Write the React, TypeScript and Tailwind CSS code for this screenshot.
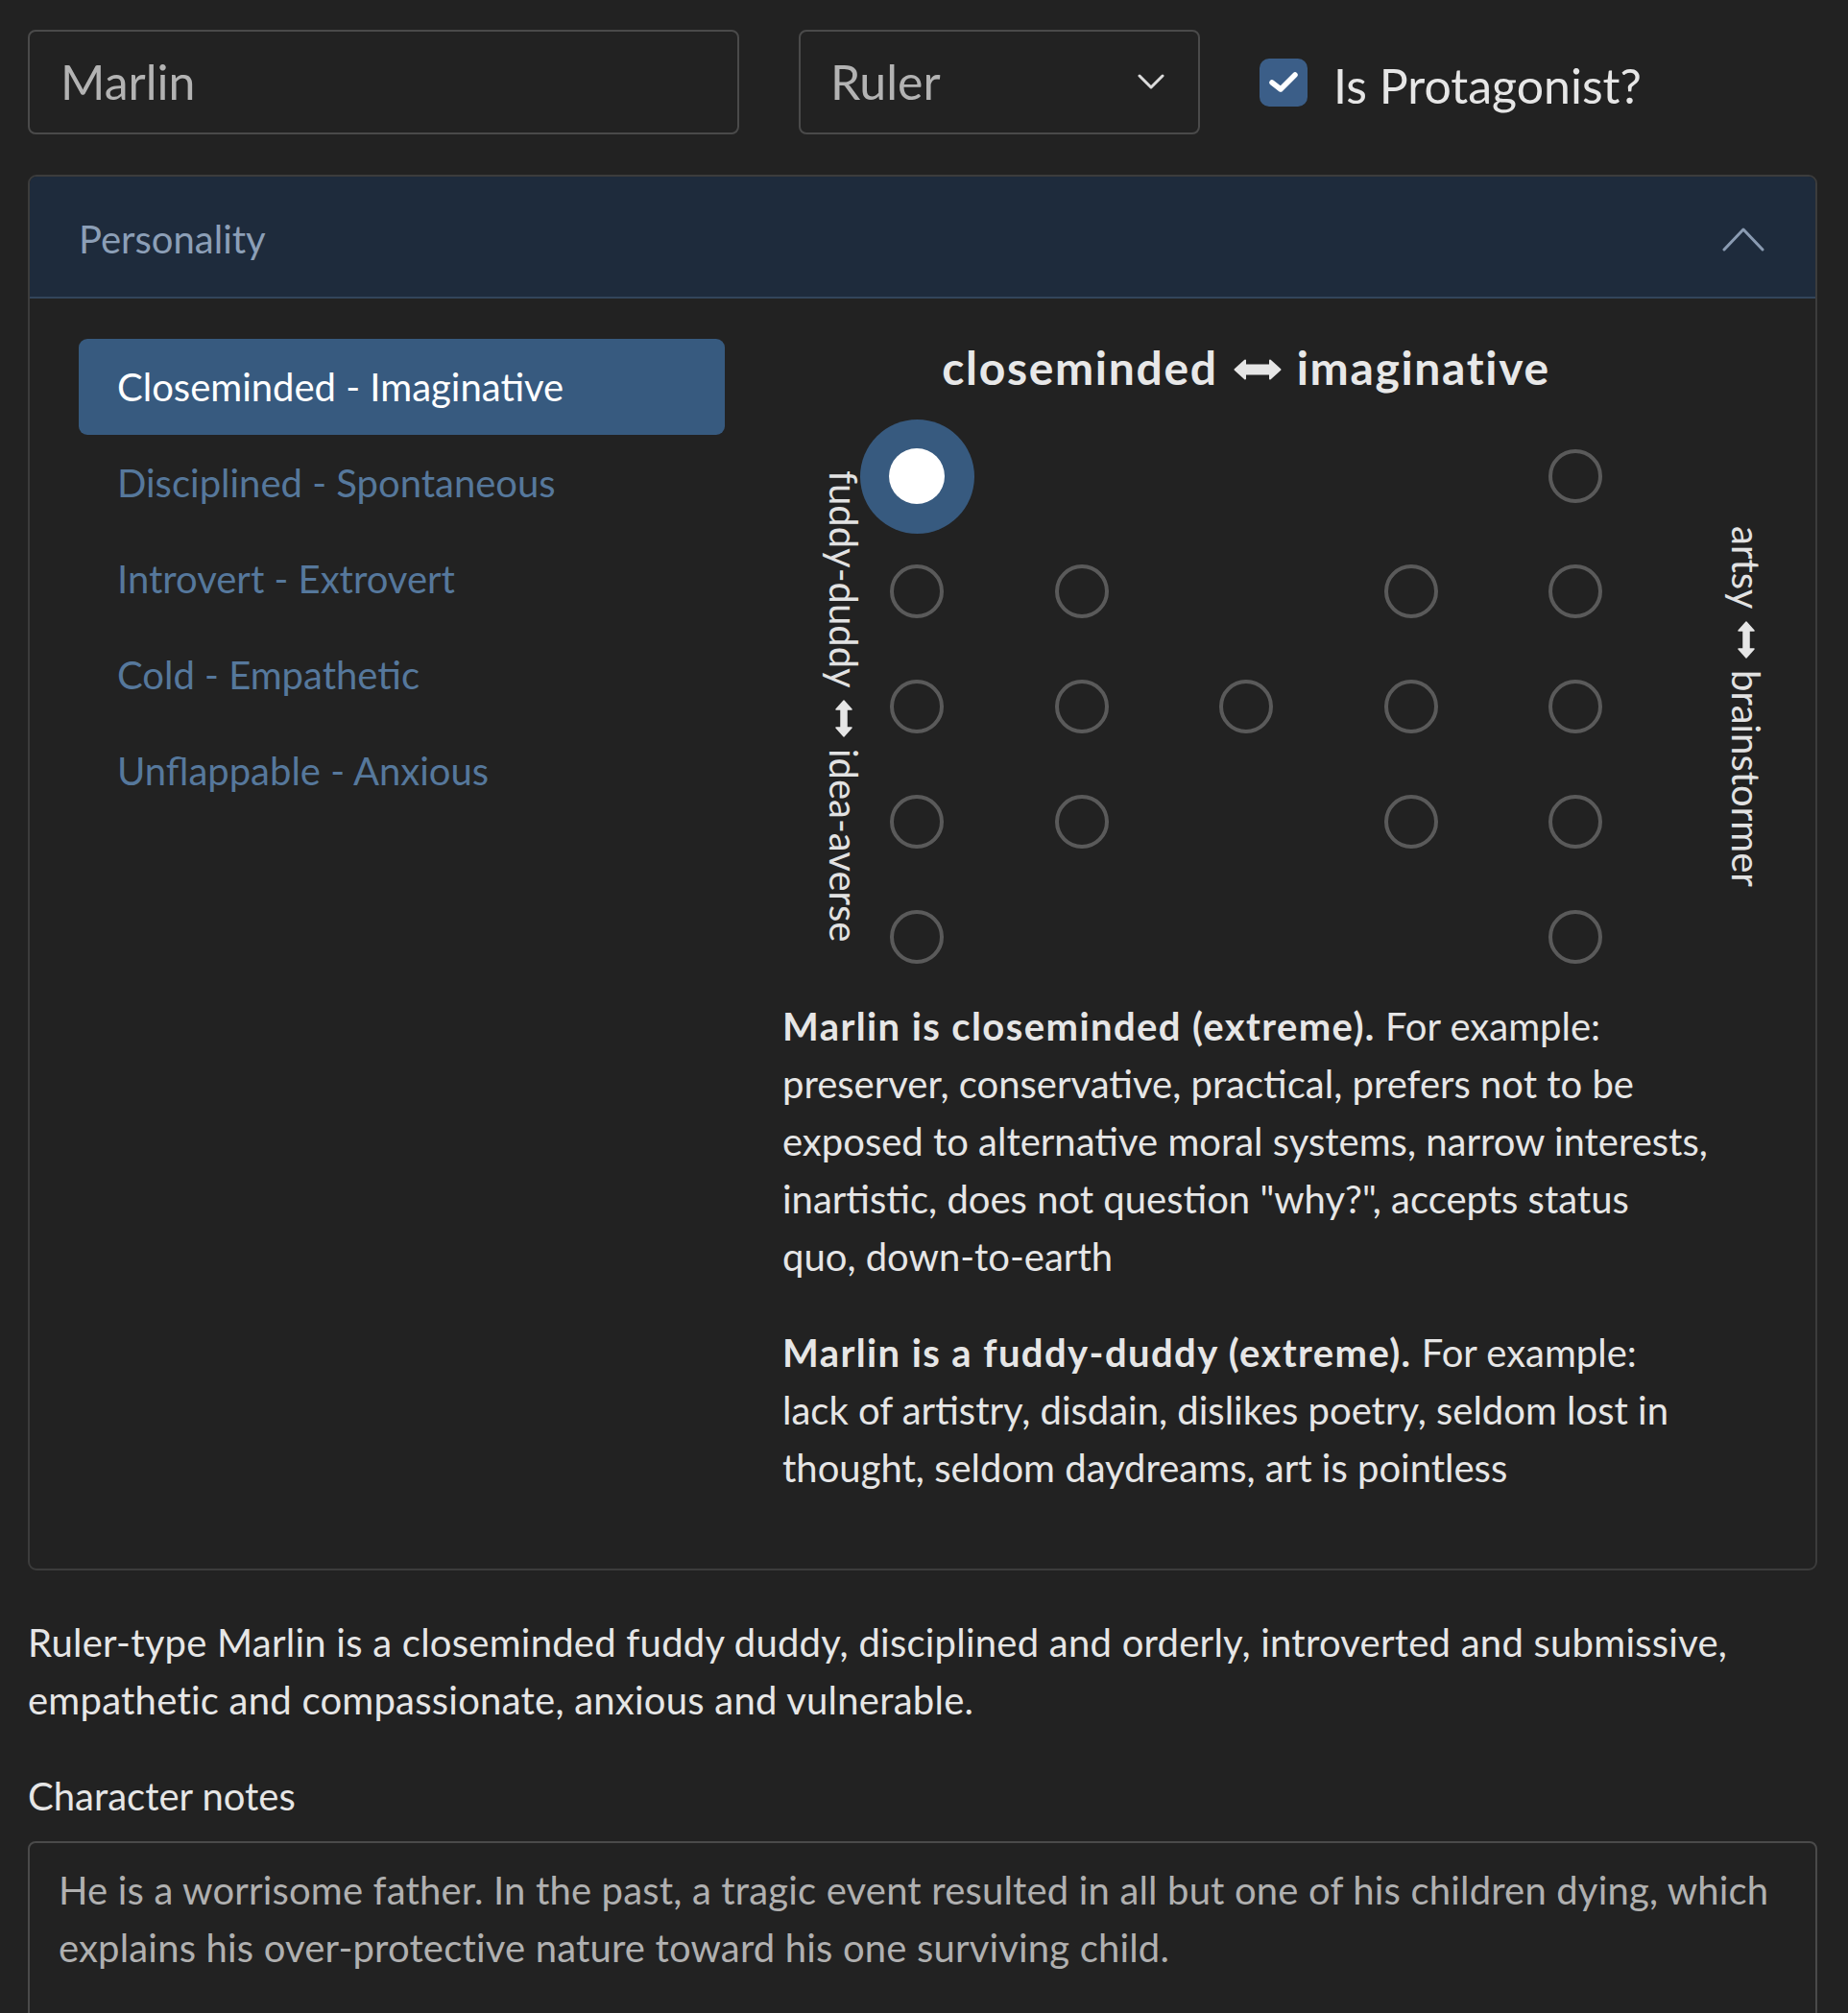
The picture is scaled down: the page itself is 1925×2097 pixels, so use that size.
import React from "react";

const font = "font-['Lato','Open_Sans',sans-serif]";

const TRAITS = [
    "Closeminded - Imaginative",
    "Disciplined - Spontaneous",
    "Introvert - Extrovert",
    "Cold - Empathetic",
    "Unflappable - Anxious",
];

// 1 = radio shown, 0 = empty slot
const GRID = [
    [1, 0, 0, 0, 1],
    [1, 1, 0, 1, 1],
    [1, 1, 1, 1, 1],
    [1, 1, 0, 1, 1],
    [1, 0, 0, 0, 1],
];

const HArrow = () => (
    <svg width="50" height="22" viewBox="0 0 50 22" className="shrink-0 mt-[4px]">
        <path
            d="M1.5 11 L12 1.5 L12 6.5 L38 6.5 L38 1.5 L48.5 11 L38 20.5 L38 15.5 L12 15.5 L12 20.5 Z"
            fill="#e6e6e6"
            stroke="#e6e6e6"
            strokeWidth="2"
            strokeLinejoin="round"
        />
    </svg>
);

const VArrow = () => (
    <svg width="18" height="39" viewBox="0 0 18 39" className="shrink-0">
        <path
            d="M9 1 L17 10 L12 10 L12 29 L17 29 L9 38 L1 29 L6 29 L6 10 L1 10 Z"
            fill="#e6e6e6"
            stroke="#e6e6e6"
            strokeWidth="1.5"
            strokeLinejoin="round"
        />
    </svg>
);

const SideLabel = (props: { top: string; bottom: string }) => {
    return (
        <div className="w-[60px] flex justify-center shrink-0">
            <div className="[writing-mode:vertical-rl] flex items-center gap-[12px] text-[40px] leading-[60px] text-[#e2e2e2]">
                <span>{props.top}</span>
                <VArrow />
                <span>{props.bottom}</span>
            </div>
        </div>
    );
};

const Radio = (props: { selected?: boolean }) => {
    if (props.selected) {
        return (
            <div className="w-[119px] h-[119px] shrink-0 rounded-full bg-[#375a7f] flex items-center justify-center">
                <div className="w-[58px] h-[58px] rounded-full bg-white" />
            </div>
        );
    }
    return <div className="w-[56px] h-[56px] shrink-0 rounded-full border-[4px] border-[#5a5a5a]" />;
};

export default function App() {
    return (
        <div className={`${font} bg-[#222222] text-[#e6e6e6] w-[1925px] h-[2097px] overflow-hidden pl-[29px] pr-[32px] pt-[31px]`}>
            {/* top row */}
            <div className="flex items-center">
                <div className="w-[741px] h-[109px] border-2 border-[#4a4a4a] rounded-[8px] flex items-center px-[32px] text-[50px] text-[#b3b3b3]">
                    Marlin
                </div>
                <div className="ml-[62px] w-[418px] h-[109px] border-2 border-[#4a4a4a] rounded-[8px] flex items-center justify-between pl-[31px] pr-[35px] text-[50px] text-[#b3b3b3]">
                    <span>Ruler</span>
                    <svg width="28" height="17" viewBox="0 0 28 17">
                        <path d="M2 2 L14 14 L26 2" fill="none" stroke="#dcdcdc" strokeWidth="3" strokeLinecap="round" strokeLinejoin="round" />
                    </svg>
                </div>
                <div className="ml-[62px] w-[50px] h-[50px] rounded-[10px] bg-[#3b5e88] flex items-center justify-center">
                    <svg width="50" height="50" viewBox="0 0 50 50">
                        <path d="M13 25 L22 32 L37 17" fill="none" stroke="#ffffff" strokeWidth="5.5" strokeLinecap="round" strokeLinejoin="round" />
                    </svg>
                </div>
                <span className="ml-[27px] mt-[7px] text-[50px] leading-[75px] text-[#e6e6e6]">Is Protagonist?</span>
            </div>

            {/* accordion */}
            <div className="mt-[42px] border-2 border-[#3c3c3c] rounded-[9px] overflow-hidden">
                <div className="h-[127px] bg-[#1e2b3c] border-b-2 border-[#33455b] flex items-center justify-between pl-[51px] pr-[53px] pt-[5px]">
                    <span className="text-[40px] text-[#8c9fb7]">Personality</span>
                    <svg width="44" height="25" viewBox="0 0 44 25">
                        <path d="M2 23 L22 2 L42 23" fill="none" stroke="#8a9bb2" strokeWidth="3" strokeLinecap="round" strokeLinejoin="round" />
                    </svg>
                </div>
                <div className="pl-[51px] pt-[42px] pb-[35px] grid grid-cols-[673px_966px] gap-x-[60px]">
                    {/* trait list */}
                    <div className="flex flex-col">
                        {TRAITS.map((t, i) => (
                            <div
                                key={t}
                                className={
                                    i === 0
                                        ? "h-[100px] px-[40px] flex items-center rounded-[9px] bg-[#375a7f] text-white text-[40px] leading-[60px]"
                                        : "h-[100px] px-[40px] flex items-center text-[#56789c] text-[40px] leading-[60px]"
                                }
                            >
                                {t}
                            </div>
                        ))}
                    </div>

                    {/* chart + description */}
                    <div className="flex flex-col">
                        <div className="h-[60px] mb-[23px] flex items-center justify-center gap-[16px] text-[48px] tracking-[0.035em] font-bold text-[#e8e8e8]">
                            <span>closeminded</span>
                            <HArrow />
                            <span>imaginative</span>
                        </div>
                        <div className="flex items-center ml-[34px]">
                            <SideLabel top="fuddy-duddy" bottom="idea-averse" />
                            <div className="grid grid-cols-[repeat(5,92px)] auto-rows-[120px] gap-x-[79.5px]">
                                {GRID.map((row, r) =>
                                    row.map((on, c) => (
                                        <div key={r + "-" + c} className="flex items-center justify-center">
                                            {on ? <Radio selected={r === 0 && c === 0} /> : null}
                                        </div>
                                    ))
                                )}
                            </div>
                            <div className="ml-[102px]">
                                <SideLabel top="artsy" bottom="brainstormer" />
                            </div>
                        </div>
                        <div className="mt-[3px] text-[40px] leading-[60px] text-[#e6e6e6]">
                            <p className="mb-[40px]">
                                <b className="font-bold tracking-[0.035em]">Marlin is closeminded (extreme).</b> For example: preserver,
                                conservative, practical, prefers not to be exposed to alternative moral systems, narrow interests,
                                inartistic, does not question "why?", accepts status quo, down-to-earth
                            </p>
                            <p className="mb-[40px]">
                                <b className="font-bold tracking-[0.035em]">Marlin is a fuddy-duddy (extreme).</b> For example: lack of
                                artistry, disdain, dislikes poetry, seldom lost in thought, seldom daydreams, art is pointless
                            </p>
                        </div>
                    </div>
                </div>
            </div>

            <p className="mt-[45px] mb-[40px] text-[40px] leading-[60px] tracking-[0.24px] pr-[40px]">
                Ruler-type Marlin is a closeminded fuddy duddy, disciplined and orderly, introverted and submissive, empathetic and
                compassionate, anxious and vulnerable.
            </p>
            <div className="text-[40px] leading-[60px] mb-[17px]">Character notes</div>
            <textarea
                readOnly
                className="block w-full h-[260px] resize-none bg-transparent border-2 border-[#4a4a4a] rounded-[8px] pt-[19px] px-[30px] text-[40px] leading-[60px] tracking-[0.17px] text-[#b0b0b0] outline-none"
                value="He is a worrisome father. In the past, a tragic event resulted in all but one of his children dying, which explains his over-protective nature toward his one surviving child."
            />
        </div>
    );
}
